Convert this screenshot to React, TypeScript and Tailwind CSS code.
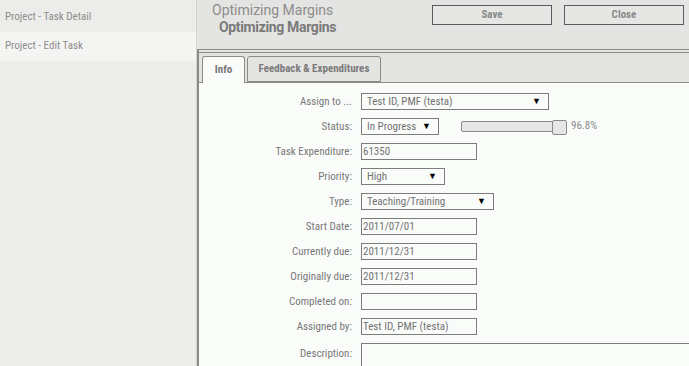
import React from "react";

const Select = ({ value, w }: { value: string; w: string }) => (
  <div className={`${w} h-[17px] border border-[#7d7d7d] bg-[#fafcfa] flex items-center justify-between pl-[5px] pr-[7px] text-[11px] text-[#727272] whitespace-nowrap`}>
    <span className="leading-none">{value}</span>
    <span className="text-[9px] text-black leading-none">▼</span>
  </div>
);

const Input = ({ value }: { value?: string }) => (
  <div className="w-[116px] h-[17px] border border-[#7d7d7d] bg-[#fafcfa] flex items-center pl-[1px] text-[11px] text-[#727272] whitespace-nowrap">
    <span className="leading-none">{value}</span>
  </div>
);

const Row = ({ label, children }: { label: string; children: React.ReactNode }) => (
  <div className="flex items-center h-[17px]">
    <div className="w-[153px] shrink-0 text-right text-[11px] text-[#787878] leading-none whitespace-nowrap">{label}</div>
    <div className="ml-[9px] flex items-center">{children}</div>
  </div>
);

export default function App() {
  return (
    <div className="flex w-[689px] h-[366px] overflow-hidden font-['Roboto',sans-serif] [font-stretch:87.5%] bg-[#ececea]">
      <div className="w-[196px] shrink-0 bg-[#ececea] flex flex-col">
        <div className="h-[32px] flex items-center pl-[5px] pt-[3px] text-[11px] text-[#8c8c8c]">Project - Task Detail</div>
        <div className="h-[29px] flex items-center pl-[5px] text-[11px] text-[#8c8c8c] bg-[#f4f5f3]">Project - Edit Task</div>
      </div>
      <div className="flex-1 min-w-0 overflow-hidden flex flex-col bg-[#e4e4e2] border-l border-[#d4d4d2]">
        <div className="h-[49px] flex shrink-0">
          <div className="flex-1 pl-[15px] pt-[2px] whitespace-nowrap">
            <div className="text-[14px] leading-[17px] text-[#8c8c8c] [font-stretch:100%]">Optimizing Margins</div>
            <div className="text-[14px] leading-[17px] font-bold text-[#7a7a7a] pl-[7px] [font-stretch:100%] tracking-[-0.35px]">Optimizing Margins</div>
          </div>
          <div className="flex gap-[12px] pt-[5px] pr-[5px] shrink-0">
            <button className="w-[120px] h-[20px] border border-[#5a5a5a] bg-[#e6e6e4] text-[11px] font-bold text-[#8a8a8a] pt-px">Save</button>
            <button className="w-[120px] h-[20px] border border-[#5a5a5a] bg-[#e6e6e4] text-[11px] font-bold text-[#8a8a8a] pt-px">Close</button>
          </div>
        </div>
        <div className="flex-1 flex flex-col border-t border-l-2 border-[#8a8a88]">
          <div className="mt-[2px] h-[31px] border-t border-b border-[#8a8a88] flex items-end pl-[3px] gap-[2px] shrink-0">
            <div className="w-[43px] h-[27px] -mb-px border border-[#8a8a88] border-b-0 rounded-t-[3px] bg-[#fafcfa] flex items-center justify-center text-[11px] font-bold text-[#777]">Info</div>
            <div className="w-[134px] h-[26px] border border-[#8a8a88] rounded-t-[3px] bg-[#e4e4e2] flex items-center justify-center text-[11px] font-bold text-[#7a7a7a]">Feedback &amp; Expenditures</div>
          </div>
          <div className="flex-1 bg-[#fafcfa] pt-[10px] flex flex-col gap-[8px]">
            <Row label="Assign to ..."><Select value="Test ID, PMF (testa)" w="w-[188px]" /></Row>
            <Row label="Status:">
              <Select value="In Progress" w="w-[78px]" />
              <div className="ml-[22px] flex items-center">
                <div className="relative w-[106px] h-[17px] flex items-center">
                  <div className="w-[93px] h-[11px] border border-[#8a8a8a] rounded-[2px] bg-[#e6e6e4]"></div>
                  <div className="absolute left-[91px] top-[2px] w-[15px] h-[15px] border border-[#8a8a8a] rounded-[2px] bg-[#e6e6e4]"></div>
                </div>
                <span className="ml-[4px] text-[11px] text-[#8a8a8a] leading-none -mt-[3px]">96.8%</span>
              </div>
            </Row>
            <Row label="Task Expenditure:"><Input value="61350" /></Row>
            <Row label="Priority:"><Select value="High" w="w-[84px]" /></Row>
            <Row label="Type:"><Select value="Teaching/Training" w="w-[133px]" /></Row>
            <Row label="Start Date:"><Input value="2011/07/01" /></Row>
            <Row label="Currently due:"><Input value="2011/12/31" /></Row>
            <Row label="Originally due:"><Input value="2011/12/31" /></Row>
            <Row label="Completed on:"><Input /></Row>
            <Row label="Assigned by:"><Input value="Test ID, PMF (testa)" /></Row>
            <div className="flex items-start">
              <div className="w-[153px] shrink-0 text-right text-[11px] text-[#787878] leading-none pt-[5px]">Description:</div>
              <div className="ml-[9px] w-[340px] shrink-0 h-[40px] border border-[#7d7d7d] border-r-0 bg-[#fafcfa]"></div>
            </div>
          </div>
        </div>
      </div>
    </div>
  );
}
